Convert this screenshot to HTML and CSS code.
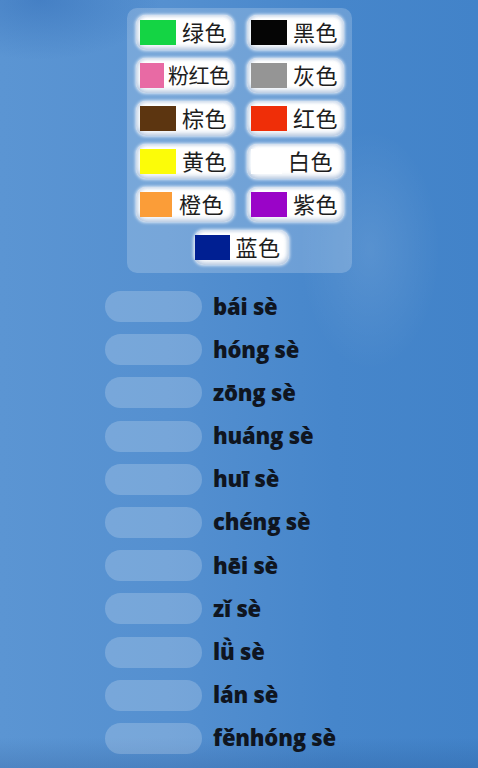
FILE: index.html
```html
<!DOCTYPE html>
<html lang="zh">
<head>
<meta charset="utf-8">
<title>颜色</title>
<link rel="stylesheet" href="styles.css">
</head>
<body>
<main class="page">
  <section class="panel">
    <div class="chip"><span class="sw sw-green"></span><span class="name">绿色</span></div>
    <div class="chip"><span class="sw sw-black"></span><span class="name">黑色</span></div>
    <div class="chip"><span class="sw sw-pink"></span><span class="name name-long">粉红色</span></div>
    <div class="chip"><span class="sw sw-gray"></span><span class="name">灰色</span></div>
    <div class="chip"><span class="sw sw-brown"></span><span class="name">棕色</span></div>
    <div class="chip"><span class="sw sw-red"></span><span class="name">红色</span></div>
    <div class="chip"><span class="sw sw-yellow"></span><span class="name">黄色</span></div>
    <div class="chip"><span class="sw sw-white"></span><span class="name">白色</span></div>
    <div class="chip"><span class="sw sw-orange"></span><span class="name">橙色</span></div>
    <div class="chip"><span class="sw sw-purple"></span><span class="name">紫色</span></div>
    <div class="chip chip-center"><span class="sw sw-blue"></span><span class="name">蓝色</span></div>
  </section>
  <ul class="list">
    <li class="row"><span class="slot"></span><span class="py">bái sè</span></li>
    <li class="row"><span class="slot"></span><span class="py">hóng sè</span></li>
    <li class="row"><span class="slot"></span><span class="py">zōng sè</span></li>
    <li class="row"><span class="slot"></span><span class="py">huáng sè</span></li>
    <li class="row"><span class="slot"></span><span class="py">huī sè</span></li>
    <li class="row"><span class="slot"></span><span class="py">chéng sè</span></li>
    <li class="row"><span class="slot"></span><span class="py">hēi sè</span></li>
    <li class="row"><span class="slot"></span><span class="py">zǐ sè</span></li>
    <li class="row"><span class="slot"></span><span class="py">lǜ sè</span></li>
    <li class="row"><span class="slot"></span><span class="py">lán sè</span></li>
    <li class="row"><span class="slot"></span><span class="py">fěnhóng sè</span></li>
  </ul>
</main>
</body>
</html>
```

FILE: styles.css
```css
* { box-sizing: border-box; }
html, body { margin: 0; padding: 0; }
body {
  width: 478px;
  height: 768px;
  overflow: hidden;
  background:
    radial-gradient(ellipse 70px 120px at 370px 250px, rgba(255,255,255,0.10), rgba(255,255,255,0) 100%),
    radial-gradient(ellipse 120px 60px at 40px 0px, rgba(30,90,170,0.35), rgba(30,90,170,0) 100%),
    linear-gradient(to bottom, rgba(0,0,0,0) 96%, rgba(20,60,120,0.18) 100%),
    linear-gradient(to right, #5b95d3 0%, #5590d0 35%, #4686cb 70%, #4283c9 100%);
  font-family: "Noto Sans CJK SC", "Noto Sans", sans-serif;
}
.page {
  display: flex;
  flex-direction: column;
  padding-top: 8px;
}
.panel {
  align-self: center;
  margin-left: 1px;
  width: 225px;
  height: 265px;
  padding: 7px 8px 8px 9px;
  border-radius: 10px;
  background: rgba(255,255,255,0.2);
  display: grid;
  grid-template-columns: 98px 97px;
  column-gap: 13px;
  row-gap: 8px;
  grid-auto-rows: 35px;
}
.chip {
  display: flex;
  align-items: center;
  gap: 6px;
  padding-left: 4px;
  border-radius: 10px;
  background: #fff;
  box-shadow:
    inset 0 -3px 4px rgba(150,175,210,0.55),
    inset 0 2px 3px rgba(200,215,235,0.6),
    inset 3px 0 3px rgba(200,215,235,0.5),
    inset -3px 0 3px rgba(200,215,235,0.5),
    0 0 3px 1px rgba(255,255,255,0.7);
}
.chip-center {
  grid-column: 1 / span 2;
  justify-self: center;
  width: 95px;
  margin-left: 2px;
  padding-left: 1px;
}
.sw {
  flex: none;
  width: 36px;
  height: 25px;
}
.sw-green { background: #14d444; }
.sw-black { background: #050505; }
.sw-pink { background: #e86aa4; width: 24px; }
.sw-gray { background: #959595; }
.sw-brown { background: #5c3510; }
.sw-red { background: #ef2e08; }
.sw-yellow { background: #fcfc08; }
.sw-white { background: #ffffff; width: 31px; }
.sw-orange { background: #fb9d38; width: 32px; }
.sw-purple { background: #9a04c8; }
.sw-blue { background: #001f92; width: 35px; }
.name {
  font-size: 22px;
  letter-spacing: 0.5px;
  line-height: 1;
  color: #1d1d1d;
  white-space: nowrap;
  margin-top: -3px;
}
.name-long {
  font-size: 21px;
  letter-spacing: -0.5px;
  margin-left: -2px;
}
.sw-orange + .name { margin-left: 1px; }
.list {
  list-style: none;
  margin: 18px 0 0;
  padding: 0 0 0 105px;
  display: flex;
  flex-direction: column;
  gap: 12.2px;
}
.row {
  display: flex;
  align-items: center;
  gap: 11px;
  height: 31px;
}
.slot {
  width: 97px;
  height: 31px;
  border-radius: 16px;
  background: rgba(255,255,255,0.2);
}
.py {
  font-family: "Open Sans", "Noto Sans", sans-serif;
  font-weight: 800;
  font-size: 22px;
  letter-spacing: -0.2px;
  color: #0f1520;
  line-height: 1;
  margin-top: -2px;
}
```
